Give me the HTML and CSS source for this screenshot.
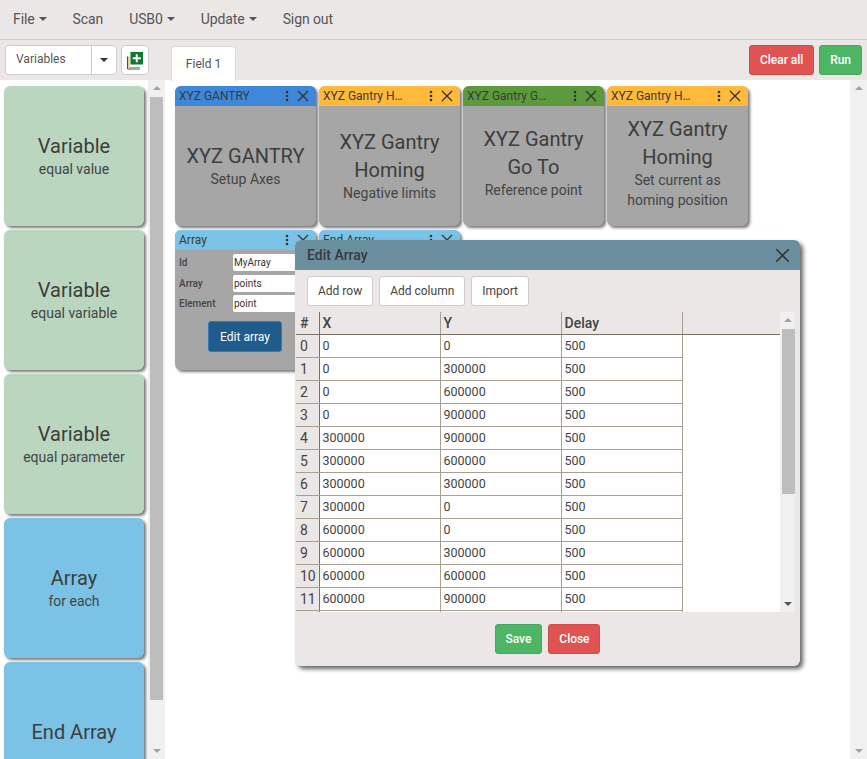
FILE: index.html
```html
<!DOCTYPE html>
<html lang="en">
<head>
    <meta charset="UTF-8">
    <meta name="viewport" content="width=device-width, initial-scale=1.0">
    <title>XYZ Gantry</title>
    <link rel="stylesheet" href="styles.css">
</head>
<body>
    <svg class="sprites" width="0" height="0">
        <symbol id="icoDots" viewBox="0 0 4 12"><circle cx="2" cy="2" r="1.3"/><circle cx="2" cy="6" r="1.3"/><circle cx="2" cy="10" r="1.3"/></symbol>
        <symbol id="icoClose" viewBox="0 0 12 12"><path d="M1 1L11 11M11 1L1 11" fill="none" stroke="currentColor" stroke-width="1.3"/></symbol>
    </svg>

    <nav class="topbar">
        <a class="nav-item">File<span class="caret"></span></a>
        <a class="nav-item">Scan</a>
        <a class="nav-item">USB0<span class="caret"></span></a>
        <a class="nav-item">Update<span class="caret"></span></a>
        <a class="nav-item">Sign out</a>
    </nav>

    <div class="toolbar">
        <div class="picker">
            <span class="picker-value">Variables</span>
            <span class="picker-arrow"><span class="caret dark"></span></span>
        </div>
        <button class="btn-add" type="button">
            <svg width="18" height="18" viewBox="0 0 18 18">
                <path d="M0.5 4.5V17H13" fill="none" stroke="#3d5a2e" stroke-width="1"/>
                <path d="M2 4.5V15.500H13" fill="none" stroke="#c9a53a" stroke-width="1"/>
                <rect x="3.500" y="0" width="12.500" height="12.500" fill="#0b7a2c"/>
                <path d="M9.750 2.200V10.300M5.700 6.250H13.800" stroke="#fff" stroke-width="2"/>
            </svg>
        </button>
        <div class="tab">Field 1</div>
        <div class="toolbar-actions">
            <button class="btn btn-red" type="button">Clear all</button>
            <button class="btn btn-green" type="button">Run</button>
        </div>
    </div>

    <div class="main">
        <aside class="sidebar">
            <div class="palette">
                <div class="tile tile-green"><div class="tile-title">Variable</div><div class="tile-sub">equal value</div></div>
                <div class="tile tile-green"><div class="tile-title">Variable</div><div class="tile-sub">equal variable</div></div>
                <div class="tile tile-green"><div class="tile-title">Variable</div><div class="tile-sub">equal parameter</div></div>
                <div class="tile tile-blue"><div class="tile-title">Array</div><div class="tile-sub">for each</div></div>
                <div class="tile tile-blue"><div class="tile-title">End Array</div></div>
            </div>
            <div class="scrollbar">
                <span class="arrow-up"></span>
                <span class="thumb thumb-side"></span>
                <span class="arrow-down"></span>
            </div>
        </aside>

        <section class="workspace">
            <div class="cards">
                <div class="card">
                    <div class="card-head head-blue">
                        <span class="card-name">XYZ GANTRY</span>
                        <svg class="ico-dots"><use href="#icoDots"/></svg>
                        <svg class="ico-close"><use href="#icoClose"/></svg>
                    </div>
                    <div class="card-body"><div class="tile-title">XYZ GANTRY</div><div class="tile-sub">Setup Axes</div></div>
                </div>
                <div class="card">
                    <div class="card-head head-orange">
                        <span class="card-name">XYZ Gantry Homing</span>
                        <svg class="ico-dots"><use href="#icoDots"/></svg>
                        <svg class="ico-close"><use href="#icoClose"/></svg>
                    </div>
                    <div class="card-body"><div class="tile-title">XYZ Gantry Homing</div><div class="tile-sub">Negative limits</div></div>
                </div>
                <div class="card">
                    <div class="card-head head-green">
                        <span class="card-name">XYZ Gantry Go To</span>
                        <svg class="ico-dots"><use href="#icoDots"/></svg>
                        <svg class="ico-close"><use href="#icoClose"/></svg>
                    </div>
                    <div class="card-body raised"><div class="tile-title">XYZ Gantry Go To</div><div class="tile-sub">Reference point</div></div>
                </div>
                <div class="card">
                    <div class="card-head head-orange">
                        <span class="card-name">XYZ Gantry Homing</span>
                        <svg class="ico-dots"><use href="#icoDots"/></svg>
                        <svg class="ico-close"><use href="#icoClose"/></svg>
                    </div>
                    <div class="card-body raised"><div class="tile-title">XYZ Gantry Homing</div><div class="tile-sub">Set current as homing position</div></div>
                </div>
                <div class="card">
                    <div class="card-head head-sky">
                        <span class="card-name">Array</span>
                        <svg class="ico-dots"><use href="#icoDots"/></svg>
                        <svg class="ico-close"><use href="#icoClose"/></svg>
                    </div>
                    <div class="card-form">
                        <label class="field"><span class="field-label">Id</span><input class="field-input" type="text" value="MyArray"></label>
                        <label class="field"><span class="field-label">Array</span><input class="field-input" type="text" value="points"></label>
                        <label class="field"><span class="field-label">Element</span><input class="field-input" type="text" value="point"></label>
                        <button class="btn-edit" type="button">Edit array</button>
                    </div>
                </div>
                <div class="card">
                    <div class="card-head head-sky">
                        <span class="card-name">End Array</span>
                        <svg class="ico-dots"><use href="#icoDots"/></svg>
                        <svg class="ico-close"><use href="#icoClose"/></svg>
                    </div>
                    <div class="card-body"></div>
                </div>
            </div>
            <div class="scrollbar">
                <span class="arrow-up"></span>
                <span class="arrow-down"></span>
            </div>
        </section>
    </div>

    <div class="dialog">
        <div class="dialog-head">
            <span class="dialog-title">Edit Array</span>
            <svg class="dialog-close"><use href="#icoClose"/></svg>
        </div>
        <div class="dialog-tools">
            <button class="btn-light" type="button">Add row</button>
            <button class="btn-light" type="button">Add column</button>
            <button class="btn-light" type="button">Import</button>
        </div>
        <div class="grid-area">
            <div class="grid-scroll">
                <table class="grid">
                    <thead>
                        <tr><th class="col-num">#</th><th class="col-val">X</th><th class="col-val">Y</th><th class="col-val">Delay</th><th class="col-rest"></th></tr>
                    </thead>
                    <tbody>
                        <tr><td class="col-num">0</td><td>0</td><td>0</td><td>500</td><td class="col-rest"></td></tr>
                        <tr><td class="col-num">1</td><td>0</td><td>300000</td><td>500</td><td class="col-rest"></td></tr>
                        <tr><td class="col-num">2</td><td>0</td><td>600000</td><td>500</td><td class="col-rest"></td></tr>
                        <tr><td class="col-num">3</td><td>0</td><td>900000</td><td>500</td><td class="col-rest"></td></tr>
                        <tr><td class="col-num">4</td><td>300000</td><td>900000</td><td>500</td><td class="col-rest"></td></tr>
                        <tr><td class="col-num">5</td><td>300000</td><td>600000</td><td>500</td><td class="col-rest"></td></tr>
                        <tr><td class="col-num">6</td><td>300000</td><td>300000</td><td>500</td><td class="col-rest"></td></tr>
                        <tr><td class="col-num">7</td><td>300000</td><td>0</td><td>500</td><td class="col-rest"></td></tr>
                        <tr><td class="col-num">8</td><td>600000</td><td>0</td><td>500</td><td class="col-rest"></td></tr>
                        <tr><td class="col-num">9</td><td>600000</td><td>300000</td><td>500</td><td class="col-rest"></td></tr>
                        <tr><td class="col-num">10</td><td>600000</td><td>600000</td><td>500</td><td class="col-rest"></td></tr>
                        <tr><td class="col-num">11</td><td>600000</td><td>900000</td><td>500</td><td class="col-rest"></td></tr>
                        <tr><td class="col-num">12</td><td>900000</td><td>900000</td><td>500</td><td class="col-rest"></td></tr>
                    </tbody>
                </table>
            </div>
            <div class="scrollbar scrollbar-grid">
                <span class="arrow-up"></span>
                <span class="thumb thumb-grid"></span>
                <span class="arrow-down"></span>
            </div>
        </div>
        <div class="dialog-foot">
            <button class="btn btn-green" type="button">Save</button>
            <button class="btn btn-red" type="button">Close</button>
        </div>
    </div>
</body>
</html>
```

FILE: styles.css
```css
* {
    box-sizing: border-box;
}
html, body {
    height: 100%;
}
body {
    font-family: Roboto, "Liberation Sans", sans-serif;
    color: #444;
    background-color: #fff;
    margin: 0;
    overflow: hidden;
    display: flex;
    flex-direction: column;
}
button {
    font-family: inherit;
    cursor: pointer;
}
.sprites {
    position: absolute;
}

/* top menu */
.topbar {
    flex: none;
    height: 40px;
    display: flex;
    align-items: center;
    padding-bottom: 1px;
    background-color: #ebe7e7;
    border-bottom: 1px solid #ccc;
}
.nav-item {
    padding: 0 13px;
    font-size: 14px;
    letter-spacing: -0.1px;
    color: #555;
    display: flex;
    align-items: center;
}
.caret {
    display: inline-block;
    width: 0;
    height: 0;
    margin-left: 4px;
    border-top: 4px solid #555;
    border-left: 4px solid transparent;
    border-right: 4px solid transparent;
}
.caret.dark {
    margin: 0;
    border-top-color: #333;
}

/* second row */
.toolbar {
    flex: none;
    height: 40px;
    display: flex;
    align-items: flex-start;
    padding: 5px 5px 0;
    background-color: #ebe7e7;
}
.picker {
    width: 112px;
    height: 30px;
    display: flex;
    background-color: #fff;
    border: 1px solid #ccc;
    border-radius: 4px;
    font-size: 12px;
}
.picker-value {
    flex: 1;
    padding-left: 10px;
    line-height: 27px;
    color: #555;
}
.picker-arrow {
    width: 25px;
    display: flex;
    align-items: center;
    justify-content: center;
    border-left: 1px solid #ccc;
}
.btn-add {
    width: 28px;
    height: 30px;
    margin-left: 4px;
    padding: 6px 0 0 5px;
    display: flex;
    background-color: #fff;
    border: 1px solid #ccc;
    border-radius: 4px;
}
.tab {
    width: 65px;
    height: 35px;
    margin: 1px 0 0 22px;
    text-align: center;
    line-height: 35px;
    font-size: 12px;
    color: #555;
    background-color: #fff;
    border: 1px solid #ddd;
    border-bottom: none;
    border-radius: 4px 4px 0 0;
}
.toolbar-actions {
    margin-left: auto;
    display: flex;
    gap: 5px;
}
.btn {
    height: 30px;
    padding: 0 10px;
    font-size: 12px;
    font-weight: 500;
    letter-spacing: -0.05px;
    color: #fff;
    border-radius: 3px;
}
.btn-red {
    background-color: #e05353;
    border: 1px solid #d34a4a;
}
.btn-green {
    background-color: #4cb664;
    border: 1px solid #45a85c;
}

/* palette on the left */
.main {
    flex: 1;
    min-height: 0;
    display: flex;
}
.sidebar {
    flex: none;
    width: 165px;
    display: flex;
    overflow: hidden;
}
.palette {
    width: 148px;
    padding: 6px 4px 0;
    display: flex;
    flex-direction: column;
    gap: 4px;
}
.tile {
    flex: none;
    height: 140px;
    display: flex;
    flex-direction: column;
    align-items: center;
    justify-content: center;
    text-align: center;
    border-radius: 6px;
    box-shadow: 2px 2px 3px #777;
}
.tile-green {
    background-color: #bad6bf;
}
.tile-blue {
    background-color: #7ac3e6;
}
.tile-title {
    font-size: 20px;
    line-height: 28px;
    color: #3d3d3d;
}
.tile-sub {
    font-size: 14px;
    line-height: 20px;
    margin: -1px 0 1px;
    color: #444;
}

/* scrollbars */
.scrollbar {
    flex: none;
    width: 17px;
    position: relative;
    display: flex;
    flex-direction: column;
    align-items: center;
    background-color: #f0f0f0;
}
.arrow-up, .arrow-down {
    position: absolute;
    left: 50%;
    margin-left: -4px;
    width: 0;
    height: 0;
    border-left: 4px solid transparent;
    border-right: 4px solid transparent;
}
.arrow-up {
    top: 6px;
    border-bottom: 4px solid #a3a3a3;
}
.arrow-down {
    bottom: 6px;
    border-top: 4px solid #a3a3a3;
}
.thumb {
    width: 13px;
    background-color: #bdbdbd;
}
.thumb-side {
    height: 603px;
    margin-top: 17px;
}
.thumb-grid {
    height: 165px;
    margin-top: 17px;
}

/* field */
.workspace {
    flex: 1;
    min-width: 0;
    display: flex;
    overflow: hidden;
}
.cards {
    flex: 1;
    padding: 6px 0 0 10px;
    display: flex;
    flex-wrap: wrap;
    align-content: flex-start;
    gap: 4px 3px;
}
.card {
    width: 141px;
    height: 140px;
    display: flex;
    flex-direction: column;
    background-color: #a6a6a6;
    border-radius: 6px;
    box-shadow: 2px 2px 3px #777;
    overflow: hidden;
}
.card-head {
    flex: none;
    height: 20px;
    padding-left: 4px;
    display: flex;
    align-items: center;
    font-size: 12px;
    color: #3a3a3a;
}
.head-blue {
    background-color: #3f87d9;
}
.head-orange {
    background-color: #ffb93b;
}
.head-green {
    background-color: #5b9a3d;
}
.head-sky {
    background-color: #7ac3e6;
}
.card-name {
    width: 84px;
    white-space: nowrap;
    overflow: hidden;
    text-overflow: ellipsis;
}
.ico-dots {
    width: 4px;
    height: 12px;
    margin-left: 22px;
    fill: #333;
}
.ico-close {
    width: 12px;
    height: 12px;
    margin-left: 8px;
    color: #333;
}
.card-body {
    flex: 1;
    padding: 0 8px;
    display: flex;
    flex-direction: column;
    justify-content: center;
    text-align: center;
}
.card-body.raised {
    padding-bottom: 6px;
}
.card-form {
    padding: 4px 4px 0;
    display: flex;
    flex-direction: column;
    gap: 3.5px;
}
.field {
    display: flex;
    align-items: center;
    height: 17px;
    font-size: 10px;
}
.field-label {
    flex: none;
    width: 54px;
    font-weight: 500;
}
.field-input {
    width: 80px;
    height: 17px;
    padding: 0 0 0 1px;
    border: none;
    border-radius: 2px;
    font-family: inherit;
    font-size: 10px;
    color: #333;
}
.btn-edit {
    align-self: center;
    width: 74px;
    height: 31px;
    margin: 5.5px 0 0 -1px;
    font-size: 12px;
    color: #fff;
    background-color: #1f5c8b;
    border: 1px solid #337ab7;
    border-radius: 3px;
}

/* edit array dialog */
.dialog {
    position: absolute;
    left: 295px;
    top: 240px;
    width: 505px;
    height: 426px;
    display: flex;
    flex-direction: column;
    background-color: #ebe7e7;
    border-radius: 6px;
    box-shadow: 3px 3px 4px #666;
    overflow: hidden;
}
.dialog-head {
    flex: none;
    height: 30px;
    padding: 0 10px 0 12px;
    display: flex;
    align-items: center;
    justify-content: space-between;
    background-color: #6a8f9f;
}
.dialog-title {
    font-size: 14px;
    font-weight: 500;
    color: #3a3a3a;
}
.dialog-close {
    width: 15px;
    height: 15px;
    color: #333;
}
.dialog-tools {
    flex: none;
    height: 42px;
    padding: 6px 0 0 12px;
    display: flex;
    align-items: flex-start;
    gap: 6px;
}
.btn-light {
    height: 30px;
    padding: 0 10px;
    font-size: 12px;
    color: #444;
    background-color: #fff;
    border: 1px solid #ccc;
    border-radius: 3px;
}
.grid-area {
    flex: none;
    height: 300px;
    padding: 0 5px 0 1px;
    display: flex;
}
.grid-scroll {
    flex: 1;
    min-width: 0;
    overflow: hidden;
}
.scrollbar-grid {
    width: 15px;
    margin-left: 0;
}
.scrollbar-grid .thumb {
    margin-left: 2px;
}
.scrollbar-grid .arrow-down {
    border-top-color: #555;
}
.grid {
    width: 100%;
    table-layout: fixed;
    border-collapse: collapse;
    font-size: 12.5px;
    color: #444;
}
.grid th, .grid td {
    height: 23px;
    padding: 0 3px;
    text-align: left;
    border: 1px solid #a89f91;
}
.grid td {
    background-color: #fff;
}
.grid th {
    height: 22px;
    font-size: 14px;
    font-weight: 500;
    background-color: #ebe7e7;
    border-top: none;
    border-bottom: 1px solid #777264;
}
.grid .col-num {
    width: 23px;
    padding-left: 4px;
    background-color: #ebe7e7;
    border-left: none;
    border-right: 1px solid #777264;
    font-size: 14px;
}
.grid .col-val {
    width: 121px;
}
.grid .col-rest {
    border-top: none;
    border-right: none;
}
.grid td.col-rest {
    border-bottom: none;
}
.dialog-foot {
    flex: 1;
    padding-top: 12px;
    display: flex;
    justify-content: center;
    align-items: flex-start;
    gap: 6px;
}
```
